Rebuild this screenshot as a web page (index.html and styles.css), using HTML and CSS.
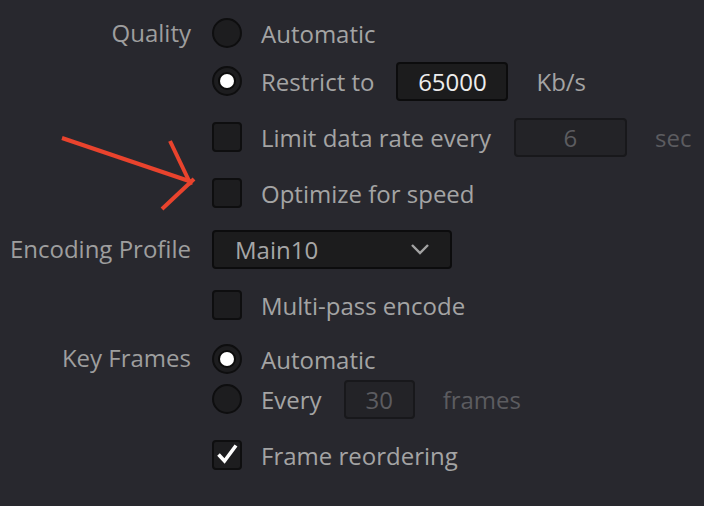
FILE: index.html
```html
<!DOCTYPE html>
<html lang="en">
<head>
    <meta charset="UTF-8">
    <title>Encoder settings</title>
    <link rel="stylesheet" href="styles.css">
</head>
<body>
    <div class="form">
        <div class="field">
            <div class="label">Quality</div>
            <div class="controls group">
                <div class="option"><span class="radio"></span><span class="text">Automatic</span></div>
                <div class="option"><span class="radio checked"></span><span class="text">Restrict to</span><span class="input">65000</span><span class="unit">Kb/s</span></div>
            </div>
        </div>
        <div class="field">
            <div class="label"></div>
            <div class="controls">
                <div class="option"><span class="check"></span><span class="text">Limit data rate every</span><span class="input disabled">6</span><span class="unit disabled">sec</span></div>
            </div>
        </div>
        <div class="field">
            <div class="label"></div>
            <div class="controls">
                <div class="option"><span class="check"></span><span class="text">Optimize for speed</span></div>
            </div>
        </div>
        <div class="field">
            <div class="label">Encoding Profile</div>
            <div class="controls">
                <div class="option">
                    <div class="select">
                        <span>Main10</span>
                        <svg width="20" height="12" viewBox="0 0 20 12"><path d="M2 2 L10 10 L18 2" fill="none" stroke="#a3a3a3" stroke-width="2.4"/></svg>
                    </div>
                </div>
            </div>
        </div>
        <div class="field">
            <div class="label"></div>
            <div class="controls">
                <div class="option"><span class="check"></span><span class="text">Multi-pass encode</span></div>
            </div>
        </div>
        <div class="field keyframes">
            <div class="label">Key Frames</div>
            <div class="controls">
                <div class="option"><span class="radio checked"></span><span class="text">Automatic</span></div>
                <div class="option"><span class="radio"></span><span class="text">Every</span><span class="input disabled small">30</span><span class="unit disabled">frames</span></div>
            </div>
        </div>
        <div class="field">
            <div class="label"></div>
            <div class="controls">
                <div class="option">
                    <span class="check">
                        <svg width="30" height="30" viewBox="0 0 30 30"><path d="M6.5 14.5 L12.5 21 L24 5.5" fill="none" stroke="#fff" stroke-width="3.6" stroke-linejoin="miter"/></svg>
                    </span>
                    <span class="text">Frame reordering</span>
                </div>
            </div>
        </div>
    </div>

    <svg class="arrow" width="704" height="506" viewBox="0 0 704 506">
        <g stroke="#e9432d" stroke-width="4" fill="none" stroke-linecap="butt">
            <path d="M62 138 L192 182"/>
            <path d="M170 141 L191 185"/>
            <path d="M162 209 L194 179"/>
        </g>
    </svg>
</body>
</html>
```

FILE: styles.css
```css
body {
    margin: 0;
    background-color: #28282e;
    color: #a4a4a4;
    font-family: "Open Sans", "Noto Sans", sans-serif;
    font-size: 24px;
    width: 704px;
    height: 506px;
    overflow: hidden;
}
.form {
    display: flex;
    flex-direction: column;
    gap: 16px;
    padding-top: 13px;
}
.field {
    display: flex;
}
.label {
    width: 191px;
    margin-right: 21px;
    height: 40px;
    line-height: 40px;
    text-align: right;
    color: #9e9e9e;
}
.controls {
    display: flex;
    flex-direction: column;
}
.controls.group {
    gap: 8px;
}
.keyframes {
    margin-top: -2px;
}
.keyframes .label {
    line-height: 38px;
}
.option {
    display: flex;
    align-items: center;
    height: 40px;
}
.radio, .check {
    width: 30px;
    height: 30px;
    box-sizing: border-box;
    background-color: #1d1d1f;
    border: 2px solid #0e0e0f;
    flex-shrink: 0;
    margin-right: 19px;
    position: relative;
}
.radio {
    border-radius: 50%;
}
.radio.checked::after {
    content: "";
    position: absolute;
    left: 6px;
    top: 6px;
    width: 14px;
    height: 14px;
    border-radius: 50%;
    background-color: #fff;
    box-shadow: 0 0 0 2px #0b0b0b;
}
.check {
    border-radius: 4px;
}
.check svg {
    position: absolute;
    left: -2px;
    top: -2px;
}
.input {
    box-sizing: border-box;
    width: 112px;
    height: 39px;
    margin-left: 22px;
    margin-right: 28px;
    border: 2px solid #0c0c0d;
    border-radius: 4px;
    background-color: #1c1c1d;
    color: #ededed;
    text-align: center;
    line-height: 35px;
}
.input.disabled {
    background-color: #232327;
    border-color: #18181b;
    color: #5c5c60;
    margin-left: 23px;
    width: 113px;
}
.input.small {
    width: 71px;
    margin-left: 22px;
}
.unit.disabled {
    color: #5c5c60;
}
.select {
    box-sizing: border-box;
    width: 240px;
    height: 39px;
    display: flex;
    align-items: center;
    justify-content: space-between;
    padding: 0 20px 0 21px;
    border: 2px solid #0c0c0d;
    border-radius: 4px;
    background-color: #1c1c1d;
    color: #a6a6a6;
}
.arrow {
    position: absolute;
    left: 0;
    top: 0;
    pointer-events: none;
}
```
